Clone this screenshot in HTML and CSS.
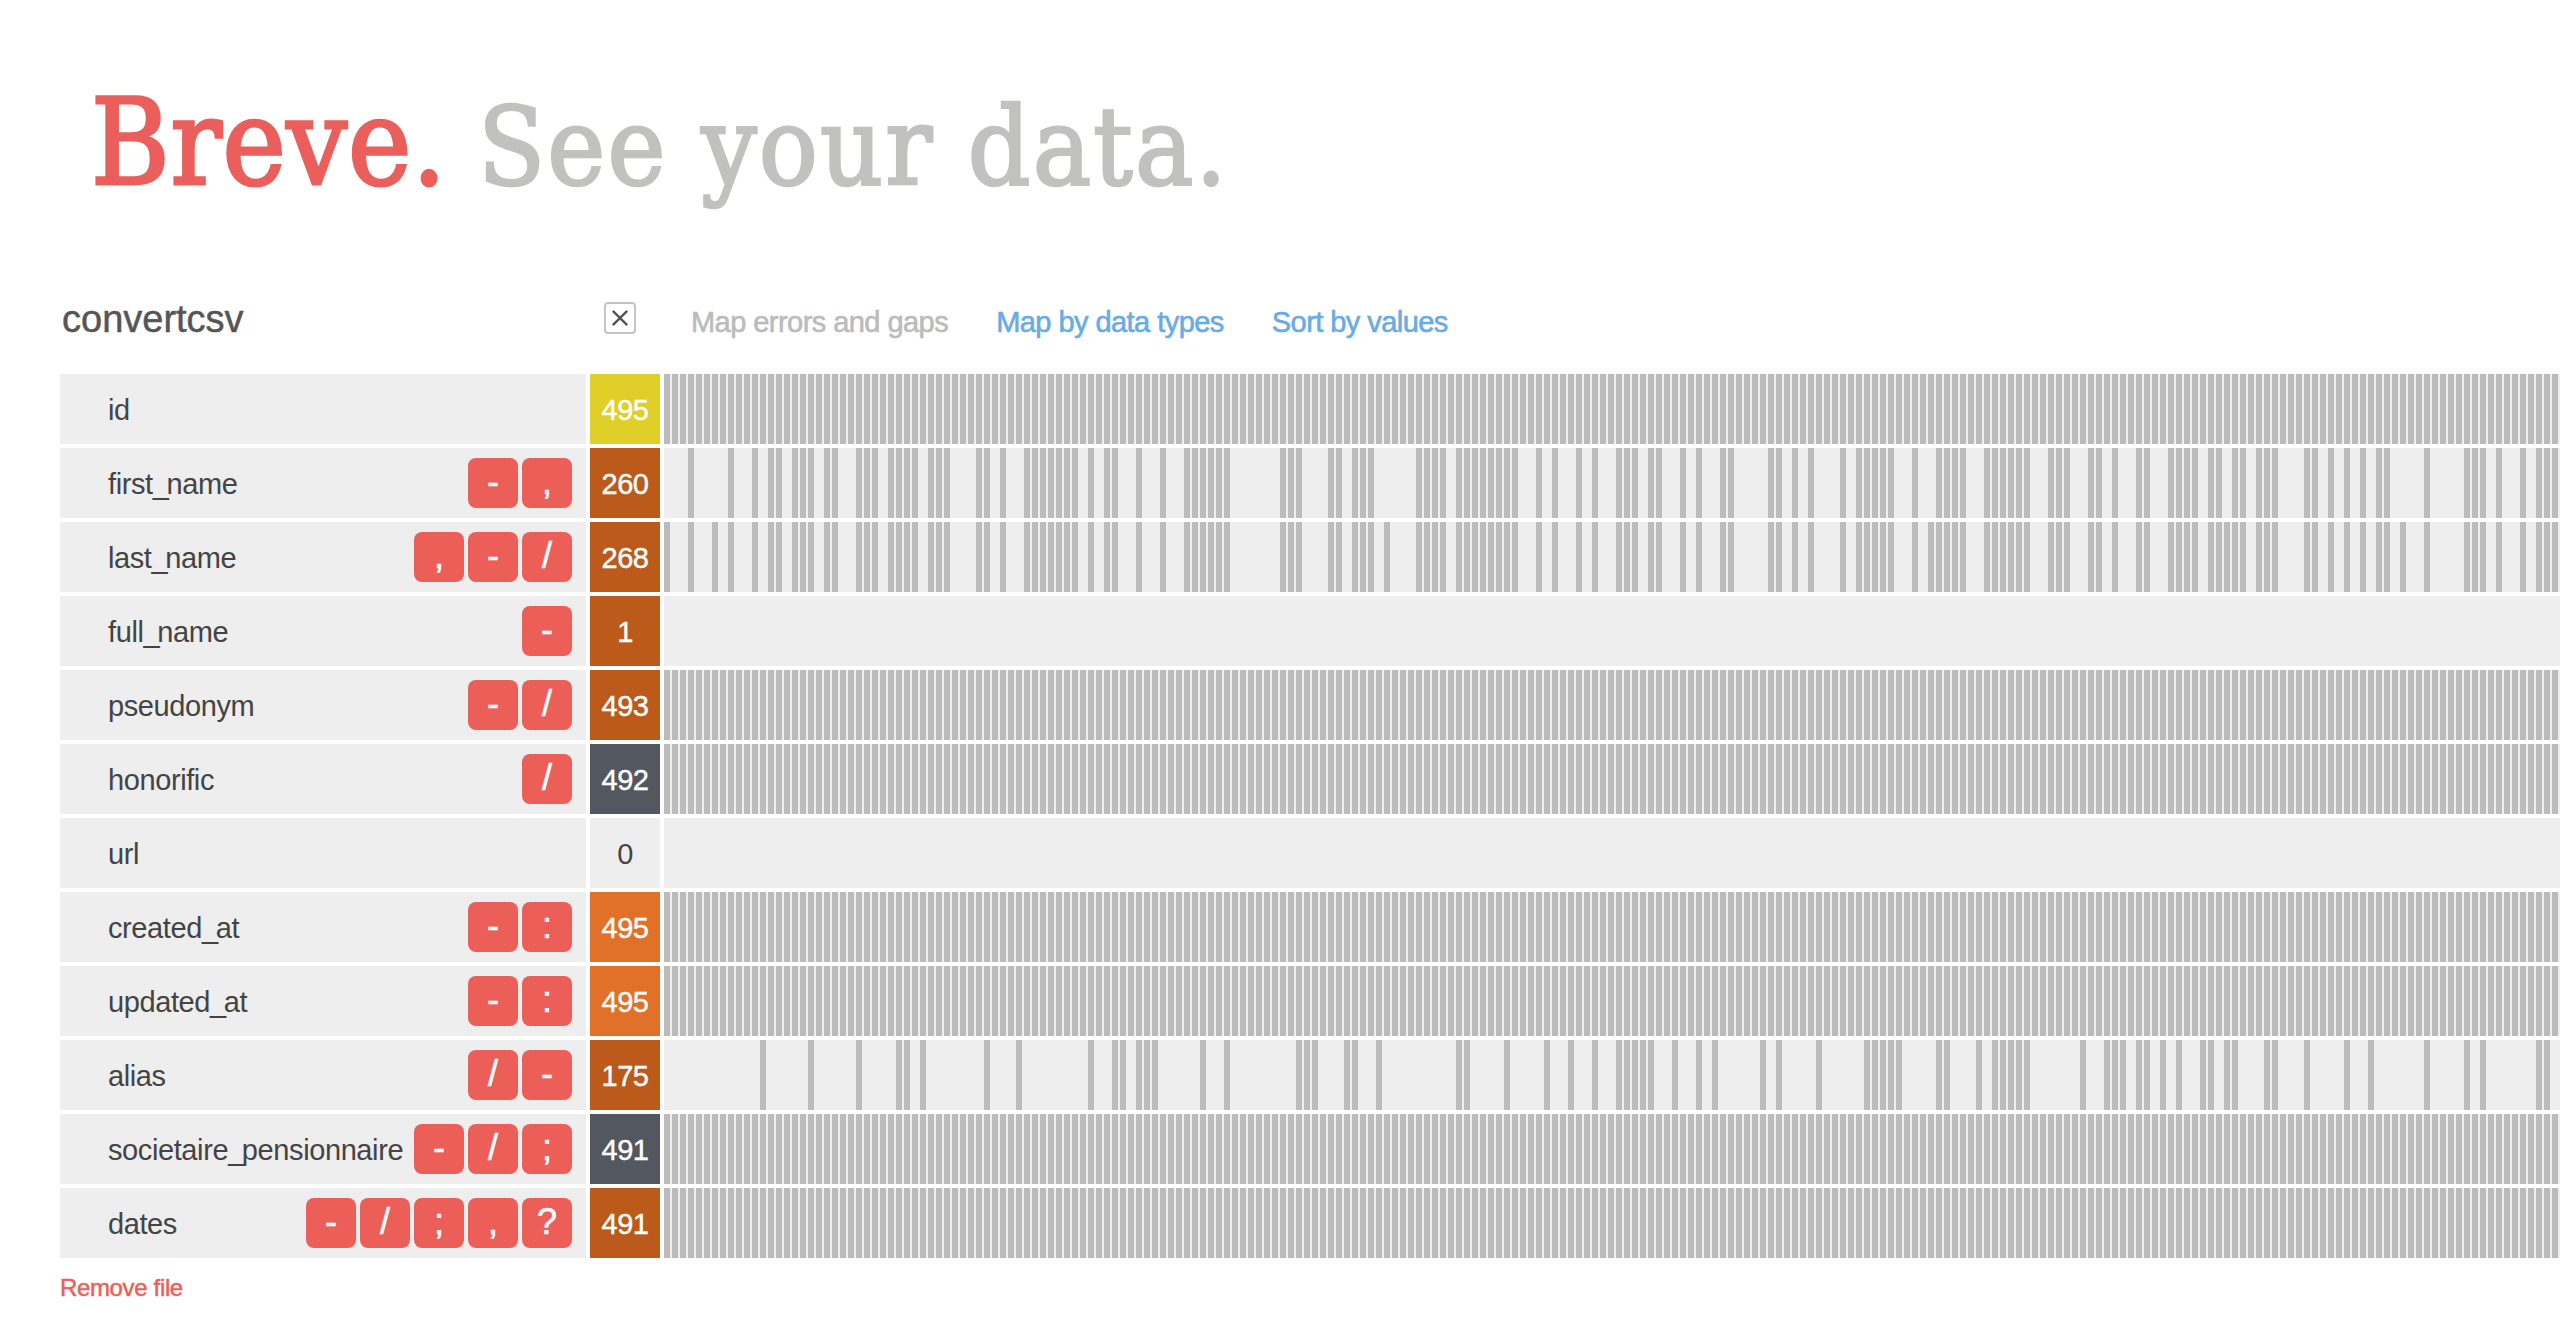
FILE: index.html
```
<!DOCTYPE html>
<html lang="en">
<head>
<meta charset="utf-8">
<title>Breve. See your data.</title>
<link rel="stylesheet" href="styles.css">
</head>
<body>
<h1 class="title"><span class="brand">Breve.</span><span class="tagline">See your data.</span></h1>
<main class="file">
  <header class="toolbar">
    <h2 class="file-name">convertcsv</h2>
    <button class="close" aria-label="Close"><svg viewBox="0 0 32 32" width="32" height="32"><path d="M8.8 8.8l14.4 14.4M23.2 8.8l-14.4 14.4"/></svg></button>
    <nav class="tabs"><span class="tab active">Map errors and gaps</span><a class="tab tab-types">Map by data types</a><a class="tab tab-sort">Sort by values</a></nav>
  </header>
  <section class="rows" id="rows"></section>
  <a class="remove">Remove file</a>
</main>
<script src="app.js"></script>
</body>
</html>
```
FILE: styles.css
```
* { box-sizing: border-box; }
body { margin: 0; height: 1320px; overflow: hidden; background: #fff; font-family: "Liberation Sans", Arial, sans-serif; color: #444; }
.title { display: flex; align-items: baseline; height: 280px; margin: 0; padding: 73px 0 0 91px; font-family: "DejaVu Serif Condensed", "DejaVu Serif", serif; font-stretch: condensed; font-weight: 400; line-height: 140px; white-space: nowrap; }
.brand { width: 387px; color: #ea5f5c; font-size: 119px; letter-spacing: 0.8px; -webkit-text-stroke: 3px #ea5f5c; }
.tagline { color: #c1c1bf; font-size: 109px; letter-spacing: 2.2px; -webkit-text-stroke: 2.5px #c1c1bf; }
.file { padding-left: 60px; }
.toolbar { display: flex; height: 94px; padding-top: 22px; }
.file-name { width: 544px; margin: 0; padding-left: 2px; font-size: 38px; line-height: 35px; font-weight: 400; color: #555; -webkit-text-stroke: 0.5px #555; }
.close { width: 32px; height: 32px; padding: 0; background: #fff; border: 2px solid #c4c4c4; border-radius: 4px; display: flex; align-items: center; justify-content: center; }
.close svg { flex: none; fill: none; stroke: #555; stroke-width: 2.4; }
.tabs { display: flex; padding-left: 55px; font-size: 29px; line-height: 41px; letter-spacing: -0.55px; white-space: nowrap; }
.tab { color: #68abe5; -webkit-text-stroke: 0.6px currentColor; }
.active { color: #bbb; }
.tab-types, .tab-sort { margin-left: 48px; }
.rows { display: grid; grid-auto-rows: 70px; row-gap: 4px; }
.row { display: grid; grid-template-columns: 526px 70px 1fr; column-gap: 4px; }
.field { display: flex; align-items: center; padding: 0 14px 0 48px; background: #eee; white-space: nowrap; }
.name { font-size: 29px; line-height: 34px; padding-top: 2px; letter-spacing: -0.4px; }
.underscore { letter-spacing: -2.4px; }
.tags { display: flex; gap: 4px; margin-left: auto; }
.tag { width: 50px; height: 50px; border-radius: 8px; background: #ec5e58; color: #fff; font-size: 36px; line-height: 48px; text-align: center; -webkit-text-stroke: 0.6px #fff; }
.count { padding-top: 3px; color: #fff; font-size: 29px; line-height: 67px; letter-spacing: -0.4px; text-align: center; -webkit-text-stroke: 0.4px currentColor; }
.yellow { background: #e0ce29; }
.brown { background: #bc5a1b; }
.slate { background: #53575f; }
.orange { background: #e17128; }
.none { background: #eee; color: #444; -webkit-text-stroke: 0; }
.track { display: grid; grid-template-columns: repeat(237, 8px); overflow: hidden; background: #eee; }
.full { background: repeating-linear-gradient(90deg, #bbb 0 6px, #eee 6px 8px); }
.bar { grid-row: 1; width: 6px; background: #bbb; }
.remove { display: block; margin-top: 16px; color: #ec5e58; font-size: 24px; line-height: 28px; letter-spacing: -0.35px; -webkit-text-stroke: 0.5px #ec5e58; }
```
FILE: app.js
```
// Gap positions along the record axis, written as single cells or inclusive ranges.
const first = "3 8 11 13-14 16-18 20-21 24-26 28-31 33-35 39-40 42 45-51 53 55-56 59 62 65-70 77-79 83-84 86-88 94-97 99-106 109 111 114 116 119-121 123-124 127 129 132-133 138-139 141 143 147 149-153 156 159-162 165-170 173-175 178-179 181 184-185 188-191 193-194 196-197 199-201 205-206 208 210 212 214-215 220 225-227 229 232 234-236";
const last = first + " 0 6 90 158 195 217";
const alias = "12 18 24 29-30 32 40 44 53 56-57 59-61 67 70 79-81 85-86 89 99-100 105 110 113 116 119-123 126 129 131 137 139 144 150-154 159-160 164 166-170 177 180-182 184-185 187 189 192-193 195-196 200-201 205 210 213 220 225 227 234-235";

const fields = [
  ["id", "", 495, "yellow", "full"],
  ["first_name", "-,", 260, "brown", first],
  ["last_name", ",-/", 268, "brown", last],
  ["full_name", "-", 1, "brown", ""],
  ["pseudonym", "-/", 493, "brown", "full"],
  ["honorific", "/", 492, "slate", "full"],
  ["url", "", 0, "none", ""],
  ["created_at", "-:", 495, "orange", "full"],
  ["updated_at", "-:", 495, "orange", "full"],
  ["alias", "/-", 175, "brown", alias],
  ["societaire_pensionnaire", "-/;", 491, "slate", "full"],
  ["dates", "-/;,?", 491, "brown", "full"]
];

function bars(spec) {
  return spec.split(" ").filter(Boolean).map(part => {
    const [from, to = from] = part.split("-").map(Number);
    let out = "";
    for (let i = from; i <= to; i++) out += `<i class="bar" style="grid-column:${i + 1}"></i>`;
    return out;
  }).join("");
}

document.getElementById("rows").innerHTML = fields.map(([name, tags, count, color, gaps]) => `
  <div class="row">
    <div class="field"><span class="name">${name.replace("_", '<span class="underscore">_</span>')}</span><span class="tags">${[...tags].map(t => `<span class="tag">${t}</span>`).join("")}</span></div>
    <div class="count ${color}">${count}</div>
    <div class="track ${gaps === "full" ? "full" : ""}">${gaps === "full" ? "" : bars(gaps)}</div>
  </div>`).join("");
```
